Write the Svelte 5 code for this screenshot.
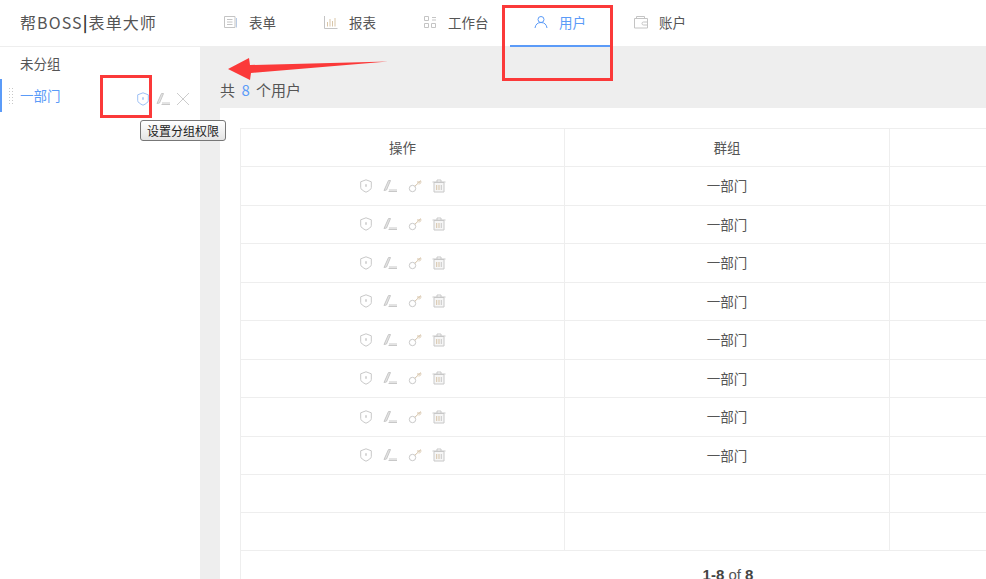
<script>
  const nav = [
    { label: '表单', icon: 'form' },
    { label: '报表', icon: 'chart' },
    { label: '工作台', icon: 'desk', wide: true },
    { label: '用户', icon: 'user', active: true },
    { label: '账户', icon: 'wallet' }
  ];
  const users = Array(8).fill('一部门');
  const blanks = [1, 2];
</script>

{#snippet shield()}
  <svg class="ico" viewBox="0 0 14 14" fill="none" stroke="currentColor"><path d="M7 .8l5.300 2v5.700c0 1.800-2.300 3.300-5.300 4.700-3-1.400-5.300-2.900-5.300-4.700V2.800z" /><path d="M7 5.200v2.600" stroke-width="1.500" /></svg>
{/snippet}
{#snippet pen()}
  <svg class="ico" viewBox="0 0 14 14" fill="none" stroke="currentColor"><path d="M1 11.500L5.500 1.500h2L3.500 11z" fill="#e4e4e4" /><path d="M5.500 12.500h8.500M6 11h8" stroke-width="1" /></svg>
{/snippet}
{#snippet key()}
  <svg class="ico tan" viewBox="0 0 14 14" fill="none"><circle cx="4.500" cy="9.500" r="3.200" stroke="#c9c9c9" /><path d="M6.800 7.300L13 1.500M9 3h4.500M11 5.500l1.500-1.500" stroke="#d6c3a8" /></svg>
{/snippet}
{#snippet bin()}
  <svg class="ico" viewBox="0 0 14 14" fill="none" stroke="currentColor"><path d="M.5 3h13M5 3V1h4v2" /><path d="M2 3.500h10V13H2z" fill="#f6f6f6" /><path d="M4.700 6v5M7 6v5" stroke="#d6c3a8" /><path d="M9.300 6v5" /></svg>
{/snippet}
{#snippet navIcon(name)}
  <svg class="nav-ico" viewBox="0 0 14 14" fill="none" stroke="currentColor">
    {#if name === 'form'}
      <path d="M.5 1.500h10.500v11H.5zM3 4.500h5.500M3 7h5.500M3 9.500h5.500" /><path d="M12.500 3v9.500" stroke="#b9cbe4" />
    {:else if name === 'chart'}
      <path d="M.5 1v12.500h13" /><path d="M3.500 11.500V7M6 11.500V4M8.500 11.500V6M11 11.500V3" stroke="#d9c6a9" />
    {:else if name === 'desk'}
      <path d="M1.500 1.500h4v4h-4zM9 2.500h4M9 5h4M1.500 8.500h4v4h-4zM8.500 8.500h4v4h-4z" />
    {:else if name === 'user'}
      <circle cx="7" cy="4.500" r="3" /><path d="M1 13c.5-3.500 2.500-5.500 6-5.500s5.500 2 6 5.500" />
    {:else}
      <path d="M2.500 3.500V1.500h8v2M.5 3.500h13v9.500H.5z" /><path d="M13.500 7H9.500a1.500 1.500 0 000 3h4" />
    {/if}
  </svg>
{/snippet}

<header class="top">
  <div class="logo">帮BOSS<b>|</b>表单大师</div>
  <nav class="nav">
    {#each nav as item}
      <div class="nav-item" class:active={item.active} class:wide={item.wide}>
        {@render navIcon(item.icon)}
        <span>{item.label}</span>
      </div>
    {/each}
  </nav>
</header>

<div class="page">
  <aside class="side">
    <div class="group">未分组</div>
    <div class="group current">
      <span class="grip"></span>
      <span class="name">一部门</span>
      <span class="group-tools">
        <span class="blue">{@render shield()}</span>
        {@render pen()}
        <svg class="ico cross" viewBox="0 0 14 14" fill="none" stroke="currentColor"><path d="M1 1l12 12M13 1L1 13" /></svg>
      </span>
      <span class="tip">设置分组权限</span>
    </div>
  </aside>

  <main class="main">
    <div class="count">共 <em>8</em> 个用户</div>
    <section class="card">
      <div class="table">
        <div class="row head">
          <div class="cell">操作</div>
          <div class="cell">群组</div>
          <div class="cell"></div>
        </div>
        {#each users as group}
          <div class="row">
            <div class="cell tools">
              {@render shield()}
              {@render pen()}
              {@render key()}
              {@render bin()}
            </div>
            <div class="cell">{group}</div>
            <div class="cell"></div>
          </div>
        {/each}
        {#each blanks as b (b)}
          <div class="row blank">
            <div class="cell"></div>
            <div class="cell"></div>
            <div class="cell"></div>
          </div>
        {/each}
        <div class="pager"><b>1-8</b> of <b>8</b></div>
      </div>
    </section>
  </main>
</div>

<!-- annotations drawn over the screenshot -->
<div class="mark mark-side"></div>
<div class="mark mark-nav"></div>
<svg class="arrow" viewBox="0 0 160 24"><path d="M0 12L21 1l1 7L160 4.500 23 16l-1 7z" fill="#fb3939" /></svg>

<style>
  :global(body) {
    margin: 0;
    overflow: hidden;
    background: #fff;
    font-family: "Noto Sans CJK SC", "Liberation Sans", sans-serif;
    font-size: 13.500px;
    color: #555;
  }

  .top {
    height: 46px;
    display: flex;
    align-items: center;
    background: #fff;
    border-bottom: 1px solid #eee;
  }
  .logo {
    width: 200px;
    padding-left: 20px;
    box-sizing: border-box;
    font-size: 16px;
    color: #555;
    letter-spacing: 1.100px;
    margin-top: -2px;
  }
  .logo b {
    font-weight: 700;
    color: #333;
  }
  .nav {
    display: flex;
    height: 100%;
  }
  .nav-item {
    display: flex;
    align-items: center;
    gap: 11px;
    width: 100px;
    box-sizing: border-box;
    padding-left: 24px;
    padding-bottom: 3px;
    color: #555;
    position: relative;
  }
  .nav-item.wide {
    width: 110px;
    padding-left: 23px;
  }
  .nav-ico {
    width: 14px;
    height: 14px;
    color: #c4c4c4;
  }
  .nav-item.active {
    color: #5b9bf8;
  }
  .nav-item.active .nav-ico {
    color: #5b9bf8;
  }
  .nav-item.active::after {
    content: "";
    position: absolute;
    left: 0;
    right: 0;
    bottom: -1px;
    height: 2px;
    background: #5b9bf8;
  }

  .page {
    display: flex;
    height: 532px;
  }
  .side {
    width: 200px;
    flex: none;
    background: #fff;
  }
  .group {
    height: 32px;
    line-height: 32px;
    padding-left: 20px;
    position: relative;
    color: #555;
    display: flex;
  }
  .group.current {
    color: #5b9bf8;
    border-left: 2px solid #5b9bf8;
    padding-left: 18px;
    box-sizing: border-box;
    height: 33px;
  }
  .grip {
    position: absolute;
    left: 6px;
    top: 8px;
    width: 6px;
    height: 18px;
    background: radial-gradient(circle, #c8c8c8 .8px, transparent 1px) 0 0 / 3px 3px;
  }
  .group-tools {
    position: absolute;
    right: 10px;
    top: 13px;
    display: flex;
    align-items: center;
    gap: 6px;
    color: #ccc;
  }
  .blue {
    display: flex;
    color: #9dc0f5;
  }
  .tip {
    position: absolute;
    left: 138px;
    top: 41px;
    height: 21px;
    line-height: 19px;
    padding: 0 6px;
    box-sizing: border-box;
    font-size: 12px;
    color: #222;
    background: linear-gradient(#fff, #e4e4e4);
    border: 1px solid #777;
    border-radius: 3px;
    white-space: nowrap;
    z-index: 2;
  }
  .ico {
    width: 14px;
    height: 14px;
    flex: none;
    color: #c8c8c8;
  }
  .blue .ico {
    color: inherit;
  }
  .ico.cross {
    color: #ccc;
  }

  .main {
    flex: 1;
    min-width: 0;
    background: #eee;
    padding: 32px 0 0 20px;
    overflow: hidden;
  }
  .count {
    height: 29px;
    line-height: 22px;
    font-size: 15px;
    color: #555;
  }
  .count em {
    font-style: normal;
    color: #5b9bf8;
    margin: 0 3px;
  }
  .card {
    background: #fff;
    padding: 20px 0 0 20px;
    height: 100%;
  }
  .table {
    width: 974px;
    border-left: 1px solid #eee;
    border-top: 1px solid #eee;
  }
  .row {
    display: grid;
    grid-template-columns: 324px 325px 1fr;
    height: 38.500px;
    box-sizing: border-box;
    border-bottom: 1px solid #eee;
  }
  .row.head,
  .row.blank {
    height: 38px;
  }
  .cell {
    display: flex;
    align-items: center;
    justify-content: center;
    border-right: 1px solid #eee;
    color: #555;
    padding-bottom: 1px;
  }
  .tools {
    gap: 10.500px;
    padding-bottom: 0;
  }
  .pager {
    text-align: center;
    padding-top: 14px;
    line-height: 20px;
    font-family: "Liberation Sans", sans-serif;
    font-size: 15px;
    color: #555;
  }
  .pager b {
    color: #444;
  }

  .mark {
    position: absolute;
    box-sizing: border-box;
    border: 3px solid #fb3939;
  }
  .mark-side {
    left: 100px;
    top: 75px;
    width: 52px;
    height: 43px;
  }
  .mark-nav {
    left: 502px;
    top: 5px;
    width: 111px;
    height: 76px;
  }
  .arrow {
    position: absolute;
    left: 228px;
    top: 57px;
    width: 160px;
    height: 24px;
  }
</style>
